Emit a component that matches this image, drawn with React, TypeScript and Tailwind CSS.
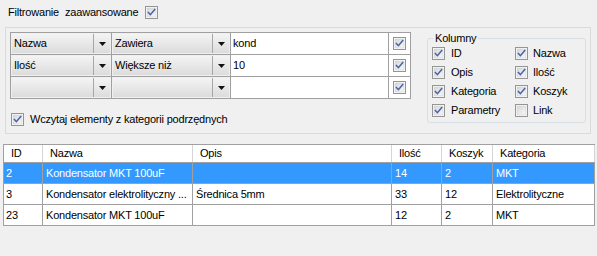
import React from "react";

const Check = ({ checked = true }: { checked?: boolean }) => (
  <svg width="13" height="13" viewBox="0 0 13 13" className="shrink-0 block">
    <defs>
      <linearGradient id="cbg" x1="0" y1="0" x2="1" y2="1">
        <stop offset="0" stopColor="#d6d7d9" />
        <stop offset="1" stopColor="#f8f8f8" />
      </linearGradient>
    </defs>
    <rect x="0.5" y="0.5" width="12" height="12" fill="#fff" stroke="#959595" />
    <rect x="2" y="2" width="9" height="9" fill="url(#cbg)" stroke="#cbccce" strokeWidth="0.6" />
    {checked && (
      <path
        d="M3.4 6.5 L5.4 8.7 L9.7 3.5"
        fill="none"
        stroke="#4863a8"
        strokeWidth="1.5"
        strokeLinecap="square"
      />
    )}
  </svg>
);

const Arrow = () => (
  <svg width="7" height="4" viewBox="0 0 7 4" className="block">
    <path d="M0 0 H7 L3.5 4 Z" fill="#111" />
  </svg>
);

const Combo = ({ value, width }: { value: string; width: string }) => (
  <div className={`${width} h-full border-r border-[#a0a0a0] p-[1px] flex`}>
    <div className="flex-1 flex items-center pl-[2px] bg-gradient-to-b from-[#f4f4f4] to-[#dcdcdc] border-r border-[#a7a7a7]">
      {value}
    </div>
    <div className="w-[16px] flex items-center justify-center bg-gradient-to-b from-[#f4f4f4] to-[#dcdcdc]">
      <Arrow />
    </div>
  </div>
);

const filters = [
  { field: "Nazwa", op: "Zawiera", val: "kond" },
  { field: "Ilość", op: "Większe niż", val: "10" },
  { field: "", op: "", val: "" },
];

const cols = [
  ["ID", "Nazwa"],
  ["Opis", "Ilość"],
  ["Kategoria", "Koszyk"],
  ["Parametry", "Link"],
];

const rows = [
  { id: "2", name: "Kondensator MKT 100uF", opis: "", ilosc: "14", koszyk: "2", kat: "MKT", sel: true },
  { id: "3", name: "Kondensator elektrolityczny ...", opis: "Średnica 5mm", ilosc: "33", koszyk: "12", kat: "Elektrolityczne", sel: false },
  { id: "23", name: "Kondensator MKT 100uF", opis: "", ilosc: "12", koszyk: "2", kat: "MKT", sel: false },
];

const widths = ["w-[39px]", "w-[150px]", "w-[199px]", "w-[50px]", "w-[51px]", "w-[102px]"];

export default function App() {
  return (
    <div className="w-[597px] h-[256px] bg-[#f0f0f0] overflow-hidden text-[11px] tracking-[-0.2px] text-black font-['Liberation_Sans',Arial,sans-serif] leading-[13px]">
      <div className="flex items-center h-[13px] mt-[6px] ml-[8px]">
        <span>Filtrowanie</span>
        <span className="ml-[6px]">zaawansowane</span>
        <span className="ml-[7px]">
          <Check />
        </span>
      </div>

      <div className="mt-[8px] ml-[5px] w-[586px] h-[107px] border border-[#dadada] flex">
        <div className="pl-[4px] pt-[4px]">
          <div className="w-[401px] border-t border-l border-[#a0a0a0]">
            {filters.map((f, i) => (
              <div key={i} className="h-[22px] flex border-b border-[#a0a0a0]">
                <Combo value={f.field} width="w-[101px]" />
                <Combo value={f.op} width="w-[119px]" />
                <div className="w-[158px] h-full bg-white border-r border-[#a0a0a0] flex items-center pl-[2px]">
                  {f.val}
                </div>
                <div className="w-[22px] h-full bg-white border-r border-[#a0a0a0] flex items-center justify-center">
                  <Check />
                </div>
              </div>
            ))}
          </div>
          <div className="flex items-center mt-[14px] ml-[1px]">
            <Check />
            <span className="ml-[6px]">Wczytaj elementy z kategorii podrzędnych</span>
          </div>
        </div>

        <fieldset className="ml-[16px] mt-[4px] w-[159px] h-[91px] border border-[#d5dfe5] rounded-[3px] px-[4px]">
          <legend className="ml-[1px] px-[2px] leading-[13px]">Kolumny</legend>
          <div className="grid grid-cols-[83px_1fr] -mt-[1px]">
            {cols.map(([a, b]) => (
              <React.Fragment key={a}>
                <div className="h-[19px] flex items-center gap-[6px]">
                  <Check />
                  <span>{a}</span>
                </div>
                <div className="h-[19px] flex items-center gap-[5px]">
                  <Check checked={b !== "Link"} />
                  <span>{b}</span>
                </div>
              </React.Fragment>
            ))}
          </div>
        </fieldset>
      </div>

      <div className="mt-[10px] ml-[3px] w-[592px] border-t border-l border-[#a0a0a0]">
        <div className="h-[18px] flex bg-white border-b border-[#a0a0a0]">
          {["ID", "Nazwa", "Opis", "Ilość", "Koszyk", "Kategoria"].map((h, i) => (
            <div key={h} className={`${widths[i]} h-full border-r border-[#d5d5d5] flex items-center pl-[7px]`}>
              {h}
            </div>
          ))}
        </div>
        {rows.map((r) => (
          <div
            key={r.id}
            className={`h-[21px] flex border-b border-[#a0a0a0] ${r.sel ? "bg-[#3399ff] text-white" : "bg-white"}`}
          >
            {[r.id, r.name, r.opis, r.ilosc, r.koszyk, r.kat].map((c, i) => (
              <div
                key={i}
                className={`${widths[i]} h-full border-r border-[#a0a0a0] flex items-center whitespace-nowrap overflow-hidden ${i === 0 ? "pl-[2px]" : "pl-[3px]"}`}
              >
                {c}
              </div>
            ))}
          </div>
        ))}
      </div>
    </div>
  );
}
